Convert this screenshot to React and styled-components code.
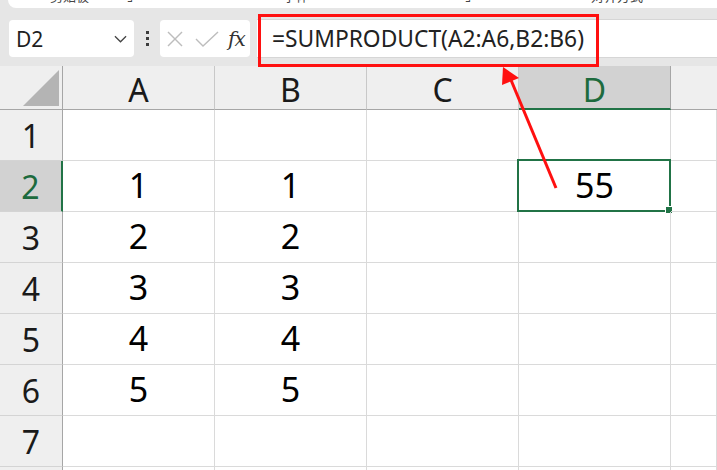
import React from "react";
import styled, { createGlobalStyle, css } from "styled-components";

const GlobalStyle = createGlobalStyle`
  html, body {
    margin: 0;
    padding: 0;
    background: #e6e6e6;
  }
  * {
    box-sizing: border-box;
  }
`;

const columns = ["A", "B", "C", "D"];
const data = [
  [null, null],
  [1, 1],
  [2, 2],
  [3, 3],
  [4, 4],
  [5, 5],
  [null, null],
  [null, null],
];

const App = () => {
  return (
    <>
      <GlobalStyle />
      <Page>
        <RibbonEdge>
          <RibbonLabel $left={42}>剪贴板</RibbonLabel>
          <RibbonLabel $left={38}>⌟</RibbonLabel>
          <RibbonLabel $left={150}>字体</RibbonLabel>
          <RibbonLabel $left={156}>⌟</RibbonLabel>
          <RibbonLabel $left={120}>对齐方式</RibbonLabel>
        </RibbonEdge>

        <FormulaRow>
          <NameBox>
            D2
            <Chevron viewBox="0 0 14 8">
              <polyline points="1,1 7,7 13,1" />
            </Chevron>
          </NameBox>
          <Grip>
            <span />
            <span />
            <span />
          </Grip>
          <FxBox>
            <ToolIcon viewBox="0 0 16 16" width="16" height="16">
              <line x1="1" y1="1" x2="15" y2="15" />
              <line x1="15" y1="1" x2="1" y2="15" />
            </ToolIcon>
            <ToolIcon viewBox="0 0 24 16" width="24" height="16">
              <polyline points="1,8 8,15 23,1" />
            </ToolIcon>
            <FxLabel>fx</FxLabel>
          </FxBox>
          <FormulaBar>=SUMPRODUCT(A2:A6,B2:B6)</FormulaBar>
        </FormulaRow>

        <Sheet>
          <Corner />
          {columns.map((c) => (
            <ColHeader key={c} $active={c === "D"}>
              {c}
            </ColHeader>
          ))}
          <ColHeader $filler />
          {data.map((row, i) => (
            <React.Fragment key={i}>
              <RowHeader $active={i === 1}>{i + 1}</RowHeader>
              <Cell>{row[0]}</Cell>
              <Cell>{row[1]}</Cell>
              <Cell />
              <Cell $selected={i === 1}>{i === 1 ? 55 : null}</Cell>
              <Cell />
            </React.Fragment>
          ))}
        </Sheet>

        <Callout />
        <Arrow viewBox="0 0 717 470" width="717" height="470">
          <line x1="556" y1="188" x2="511" y2="80" />
          <polygon points="503,67 502,85 519,78" />
        </Arrow>
      </Page>
    </>
  );
};

export default App;

const Page = styled.div`
  position: relative;
  width: 717px;
  height: 470px;
  overflow: hidden;
  background: #e6e6e6;
  font-family: "Noto Sans", "Noto Sans CJK SC", sans-serif;
`;

const RibbonEdge = styled.div`
  display: flex;
  height: 8px;
  margin-left: 8px;
  background: #ffffff;
  border-bottom-left-radius: 8px;
  overflow: hidden;
`;

const RibbonLabel = styled.span`
  margin-left: ${(p) => p.$left}px;
  margin-top: -12px;
  font-size: 13px;
  line-height: 16px;
  color: #444;
  white-space: nowrap;
`;

const FormulaRow = styled.div`
  display: flex;
  align-items: center;
  height: 58px;
  padding: 3px 0 0 9px;
`;

const NameBox = styled.div`
  display: flex;
  align-items: center;
  justify-content: space-between;
  width: 125px;
  height: 37px;
  padding: 0 7px 0 7px;
  background: #ffffff;
  border-radius: 4px;
  font-size: 21px;
  color: #1f1f1f;
`;

const Chevron = styled.svg`
  width: 13px;
  height: 8px;
  fill: none;
  stroke: #444;
  stroke-width: 1.4;
`;

const Grip = styled.div`
  display: flex;
  flex-direction: column;
  align-items: center;
  gap: 3px;
  width: 26px;

  span {
    width: 3px;
    height: 3px;
    background: #3c3c3c;
  }
`;

const FxBox = styled.div`
  display: flex;
  align-items: center;
  gap: 12px;
  width: 90px;
  height: 37px;
  padding-left: 7px;
  background: #ffffff;
  border-radius: 4px;
`;

const ToolIcon = styled.svg`
  fill: none;
  stroke: #bdbdbd;
  stroke-width: 1.4;
`;

const FxLabel = styled.span`
  margin-left: -3px;
  font-family: "DejaVu Serif", "Liberation Serif", serif;
  font-style: italic;
  font-size: 20px;
  color: #333;
  letter-spacing: -1px;
`;

const FormulaBar = styled.div`
  flex: 1;
  display: flex;
  align-items: center;
  height: 39px;
  margin-left: 7px;
  padding-left: 15px;
  background: #ffffff;
  border-top: 1px solid #d6d6d6;
  border-bottom: 1px solid #d6d6d6;
  font-size: 22.8px;
  color: #222;
  white-space: nowrap;
`;

const Sheet = styled.div`
  display: grid;
  grid-template-columns: 63px repeat(4, 152px) 1fr;
  grid-template-rows: 44px;
  grid-auto-rows: 51px;
  background: #ffffff;
`;

const headerBase = css`
  display: flex;
  align-items: center;
  justify-content: center;
  background: #efefef;
  color: #1a1a1a;
  font-size: 32px;
`;

const Corner = styled.div`
  position: relative;
  background: #efefef;
  border-right: 1px solid #a6a6a6;
  border-bottom: 1px solid #a6a6a6;

  &::after {
    content: "";
    position: absolute;
    right: 3px;
    bottom: 3px;
    width: 36px;
    height: 36px;
    background: #b4b4b4;
    clip-path: polygon(100% 0, 100% 100%, 0 100%);
  }
`;

const ColHeader = styled.div`
  ${headerBase};
  padding-top: 4px;
  border-right: ${(p) => (p.$filler ? "none" : "1px solid #c8c8c8")};
  border-bottom: 1px solid #a6a6a6;

  ${(p) =>
    p.$active &&
    css`
      background: #d2d2d2;
      color: #1d6b3e;
      border-right-color: #a6a6a6;
      border-bottom: 2px solid #217346;
    `}
`;

const RowHeader = styled.div`
  ${headerBase};
  border-right: 1px solid #a6a6a6;
  border-bottom: 1px solid #d4d4d4;

  ${(p) =>
    p.$active &&
    css`
      background: #d2d2d2;
      color: #1d6b3e;
      border-right: 2px solid #217346;
    `}
`;

const Cell = styled.div`
  position: relative;
  display: flex;
  align-items: center;
  justify-content: center;
  padding-bottom: 3px;
  border-right: 1px solid #dadada;
  border-bottom: 1px solid #dadada;
  font-size: 34px;
  color: #000;

  ${(p) =>
    p.$selected &&
    css`
      &::before {
        content: "";
        position: absolute;
        left: -2px;
        top: -2px;
        right: -1px;
        bottom: -1px;
        border: 2px solid #217346;
      }
      &::after {
        content: "";
        position: absolute;
        right: -3px;
        bottom: -3px;
        width: 6px;
        height: 6px;
        background: #217346;
        border: 1px solid #ffffff;
      }
    `}
`;

const Callout = styled.div`
  position: absolute;
  left: 258px;
  top: 14px;
  width: 341px;
  height: 53px;
  border: 3px solid #ff1010;
`;

const Arrow = styled.svg`
  position: absolute;
  left: 0;
  top: 0;
  pointer-events: none;

  line {
    stroke: #ff1010;
    stroke-width: 3;
  }
  polygon {
    fill: #ff1010;
  }
`;
